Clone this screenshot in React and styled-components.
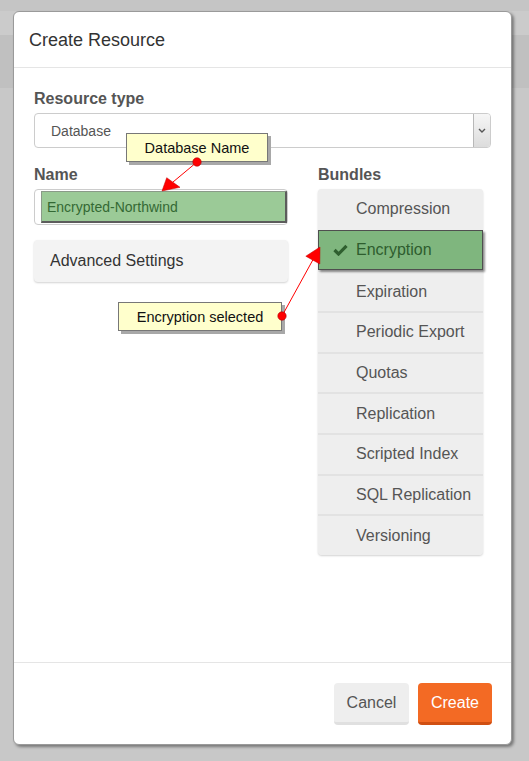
import React from 'react';
import styled, { createGlobalStyle } from 'styled-components';

const Global = createGlobalStyle`
  html, body { margin: 0; padding: 0; height: 100%; }
  body {
    font-family: "Liberation Sans", Arial, sans-serif;
    background: linear-gradient(to bottom,
      #c5c5c5 0, #c5c5c5 11px,
      #cbcbcb 11px, #cbcbcb 35px,
      #c0c0c0 35px, #c0c0c0 88px,
      #c8c8c8 88px);
  }
`;

const Page = styled.div`
  position: relative;
  width: 529px;
  height: 761px;
  padding: 11px 0 0 13px;
  box-sizing: border-box;
`;

const Dialog = styled.div`
  width: 499px;
  height: 734px;
  box-sizing: border-box;
  background: #fff;
  border: 1px solid #9a9a9a;
  border-radius: 6px;
  box-shadow: 2px 2px 3px rgba(0, 0, 0, 0.4);
  display: flex;
  flex-direction: column;
`;

const Header = styled.div`
  height: 56px;
  box-sizing: border-box;
  border-bottom: 1px solid #e5e5e5;
  padding: 1px 15px 0;
  display: flex;
  align-items: center;
`;

const Title = styled.h4`
  margin: 0;
  font-size: 18px;
  font-weight: normal;
  color: #333;
`;

const Body = styled.div`
  flex: 1;
  padding: 20px 20px 0 20px;
`;

const Label = styled.div`
  font-size: 16px;
  font-weight: bold;
  color: #555;
  line-height: 22px;
  margin-bottom: ${(p) => p.$mb || 3}px;
`;

const Select = styled.div`
  height: 35px;
  box-sizing: border-box;
  border: 1px solid #ccc;
  border-radius: 4px;
  display: flex;
  align-items: center;
  padding-left: 16px;
  font-size: 14px;
  color: #555;
`;

const SelectArrow = styled.div`
  margin-left: auto;
  align-self: stretch;
  width: 16px;
  border-left: 1px solid #b8b8b8;
  border-radius: 0 3px 3px 0;
  background: linear-gradient(#f6f6f6, #dcdcdc);
  display: flex;
  align-items: center;
  justify-content: center;
`;

const Columns = styled.div`
  margin-top: 16px;
  display: grid;
  grid-template-columns: 254px 165px;
  column-gap: 30px;
  align-items: start;
`;

const Column = styled.div`
  display: flex;
  flex-direction: column;
`;

const NameInput = styled.div`
  height: 36px;
  box-sizing: border-box;
  border: 1px solid #ccc;
  border-radius: 4px;
  padding: 1px 0 0 6px;
  display: flex;
`;

const GreenField = styled.div`
  flex: 1;
  height: 32px;
  box-sizing: border-box;
  background: #9bca97;
  border: 1px solid #8a9a88;
  border-right: 2px solid #5c5c5c;
  border-bottom: 2px solid #5c5c5c;
  padding-left: 5px;
  display: flex;
  align-items: center;
  font-size: 14px;
  color: #346934;
`;

const Advanced = styled.div`
  margin-top: 15px;
  height: 42px;
  box-sizing: border-box;
  background: #f3f3f3;
  border-radius: 4px;
  box-shadow: 0 1px 2px rgba(0, 0, 0, 0.18);
  padding-left: 16px;
  display: flex;
  align-items: center;
  font-size: 16px;
  color: #333;
`;

const BundleList = styled.div`
  width: 165px;
  border-radius: 4px;
  box-shadow: 0 1px 2px rgba(0, 0, 0, 0.18);
  background: #eeeeee;
`;

const Bundle = styled.div`
  height: 40.67px;
  box-sizing: border-box;
  display: flex;
  align-items: center;
  padding-left: 15px;
  font-size: 16px;
  position: relative;
  background: #eeeeee;
  color: #555;
  border-top: ${(p) => (p.$first ? 'none' : '2px solid #e2e2e2')};
  border-radius: ${(p) => (p.$first ? '4px 4px 0 0' : p.$last ? '0 0 4px 4px' : '0')};

  &[data-selected='true'] {
    background: #7fb67e;
    color: #2e5d2e;
    border: 1px solid #4f4f4f;
    padding-left: 14px;
    box-shadow: 2px 2px 2px rgba(0, 0, 0, 0.4);
    z-index: 1;
  }
`;

const IconSlot = styled.span`
  width: 23px;
  display: inline-flex;
  align-items: center;
`;

const Footer = styled.div`
  border-top: 1px solid #e5e5e5;
  padding: 20px 19px 19px 20px;
  display: flex;
  justify-content: flex-end;
  gap: 9px;
`;

const Button = styled.button`
  height: 42px;
  width: ${(p) => p.$w}px;
  box-sizing: border-box;
  border: none;
  border-radius: 4px;
  font-family: "Liberation Sans", Arial, sans-serif;
  font-size: 16px;
  padding: 1px 0 0;
  background: ${(p) => (p.$primary ? '#f36a24' : '#eeeeee')};
  border-bottom: 3px solid ${(p) => (p.$primary ? '#d04f12' : '#e0e0e0')};
  color: ${(p) => (p.$primary ? '#fff' : '#555')};
`;

const Note = styled.div`
  position: absolute;
  left: ${(p) => p.$x}px;
  top: ${(p) => p.$y}px;
  width: ${(p) => p.$w}px;
  height: ${(p) => p.$h}px;
  box-sizing: border-box;
  background: #ffffcc;
  border: 1px solid #777;
  box-shadow: 3px 3px 0 #a8a8a8;
  display: flex;
  align-items: center;
  justify-content: center;
  font-size: 14.5px;
  color: #111;
  z-index: 5;
`;

const Overlay = styled.svg`
  position: absolute;
  left: 0;
  top: 0;
  z-index: 6;
  pointer-events: none;
`;

const bundles = [
  'Compression',
  'Encryption',
  'Expiration',
  'Periodic Export',
  'Quotas',
  'Replication',
  'Scripted Index',
  'SQL Replication',
  'Versioning',
];

const Check = () => (
  <svg width="15" height="12" viewBox="0 0 15 12">
    <path d="M1.5 6 L5.5 10 L13.5 1.8" stroke="#2f5f2f" strokeWidth="3.2" fill="none" />
  </svg>
);

const Chevron = () => (
  <svg width="8" height="5" viewBox="0 0 8 5">
    <path d="M1 1 L4 4 L7 1" stroke="#555" strokeWidth="1.4" fill="none" />
  </svg>
);

export default function App() {
  return (
    <Page>
      <Global />
      <Dialog>
        <Header>
          <Title>Create Resource</Title>
        </Header>
        <Body>
          <Label>Resource type</Label>
          <Select>
            Database
            <SelectArrow>
              <Chevron />
            </SelectArrow>
          </Select>
          <Columns>
            <Column>
              <Label $mb={3}>Name</Label>
              <NameInput>
                <GreenField>Encrypted-Northwind</GreenField>
              </NameInput>
              <Advanced>Advanced Settings</Advanced>
            </Column>
            <Column>
              <Label $mb={3}>Bundles</Label>
              <BundleList>
                {bundles.map((b, i) => (
                  <Bundle
                    key={b}
                    data-selected={b === 'Encryption' ? 'true' : 'false'}
                    $first={i === 0}
                    $last={i === bundles.length - 1}
                  >
                    <IconSlot>{b === 'Encryption' ? <Check /> : null}</IconSlot>
                    {b}
                  </Bundle>
                ))}
              </BundleList>
            </Column>
          </Columns>
        </Body>
        <Footer>
          <Button $w={75}>Cancel</Button>
          <Button $w={74} $primary>Create</Button>
        </Footer>
      </Dialog>

      <Note $x={126} $y={133} $w={142} $h={29}>Database Name</Note>
      <Note $x={118} $y={302} $w={164} $h={29}>Encryption selected</Note>

      <Overlay width="529" height="761" viewBox="0 0 529 761">
        <line x1="197" y1="162" x2="173" y2="182" stroke="#ff0000" strokeWidth="1" />
        <polygon points="162,191 166.7,177.7 180,187.3" fill="#ff0000" stroke="#c00000" strokeWidth="0.5" />
        <circle cx="197" cy="162" r="4.2" fill="#ff0000" stroke="#b00000" strokeWidth="0.6" />

        <line x1="282" y1="316" x2="312.8" y2="260" stroke="#ff0000" strokeWidth="1" />
        <polygon points="320,247 319.8,264 305.8,256.2" fill="#ff0000" stroke="#c00000" strokeWidth="0.5" />
        <circle cx="282" cy="316" r="4.2" fill="#ff0000" stroke="#b00000" strokeWidth="0.6" />
      </Overlay>
    </Page>
  );
}
